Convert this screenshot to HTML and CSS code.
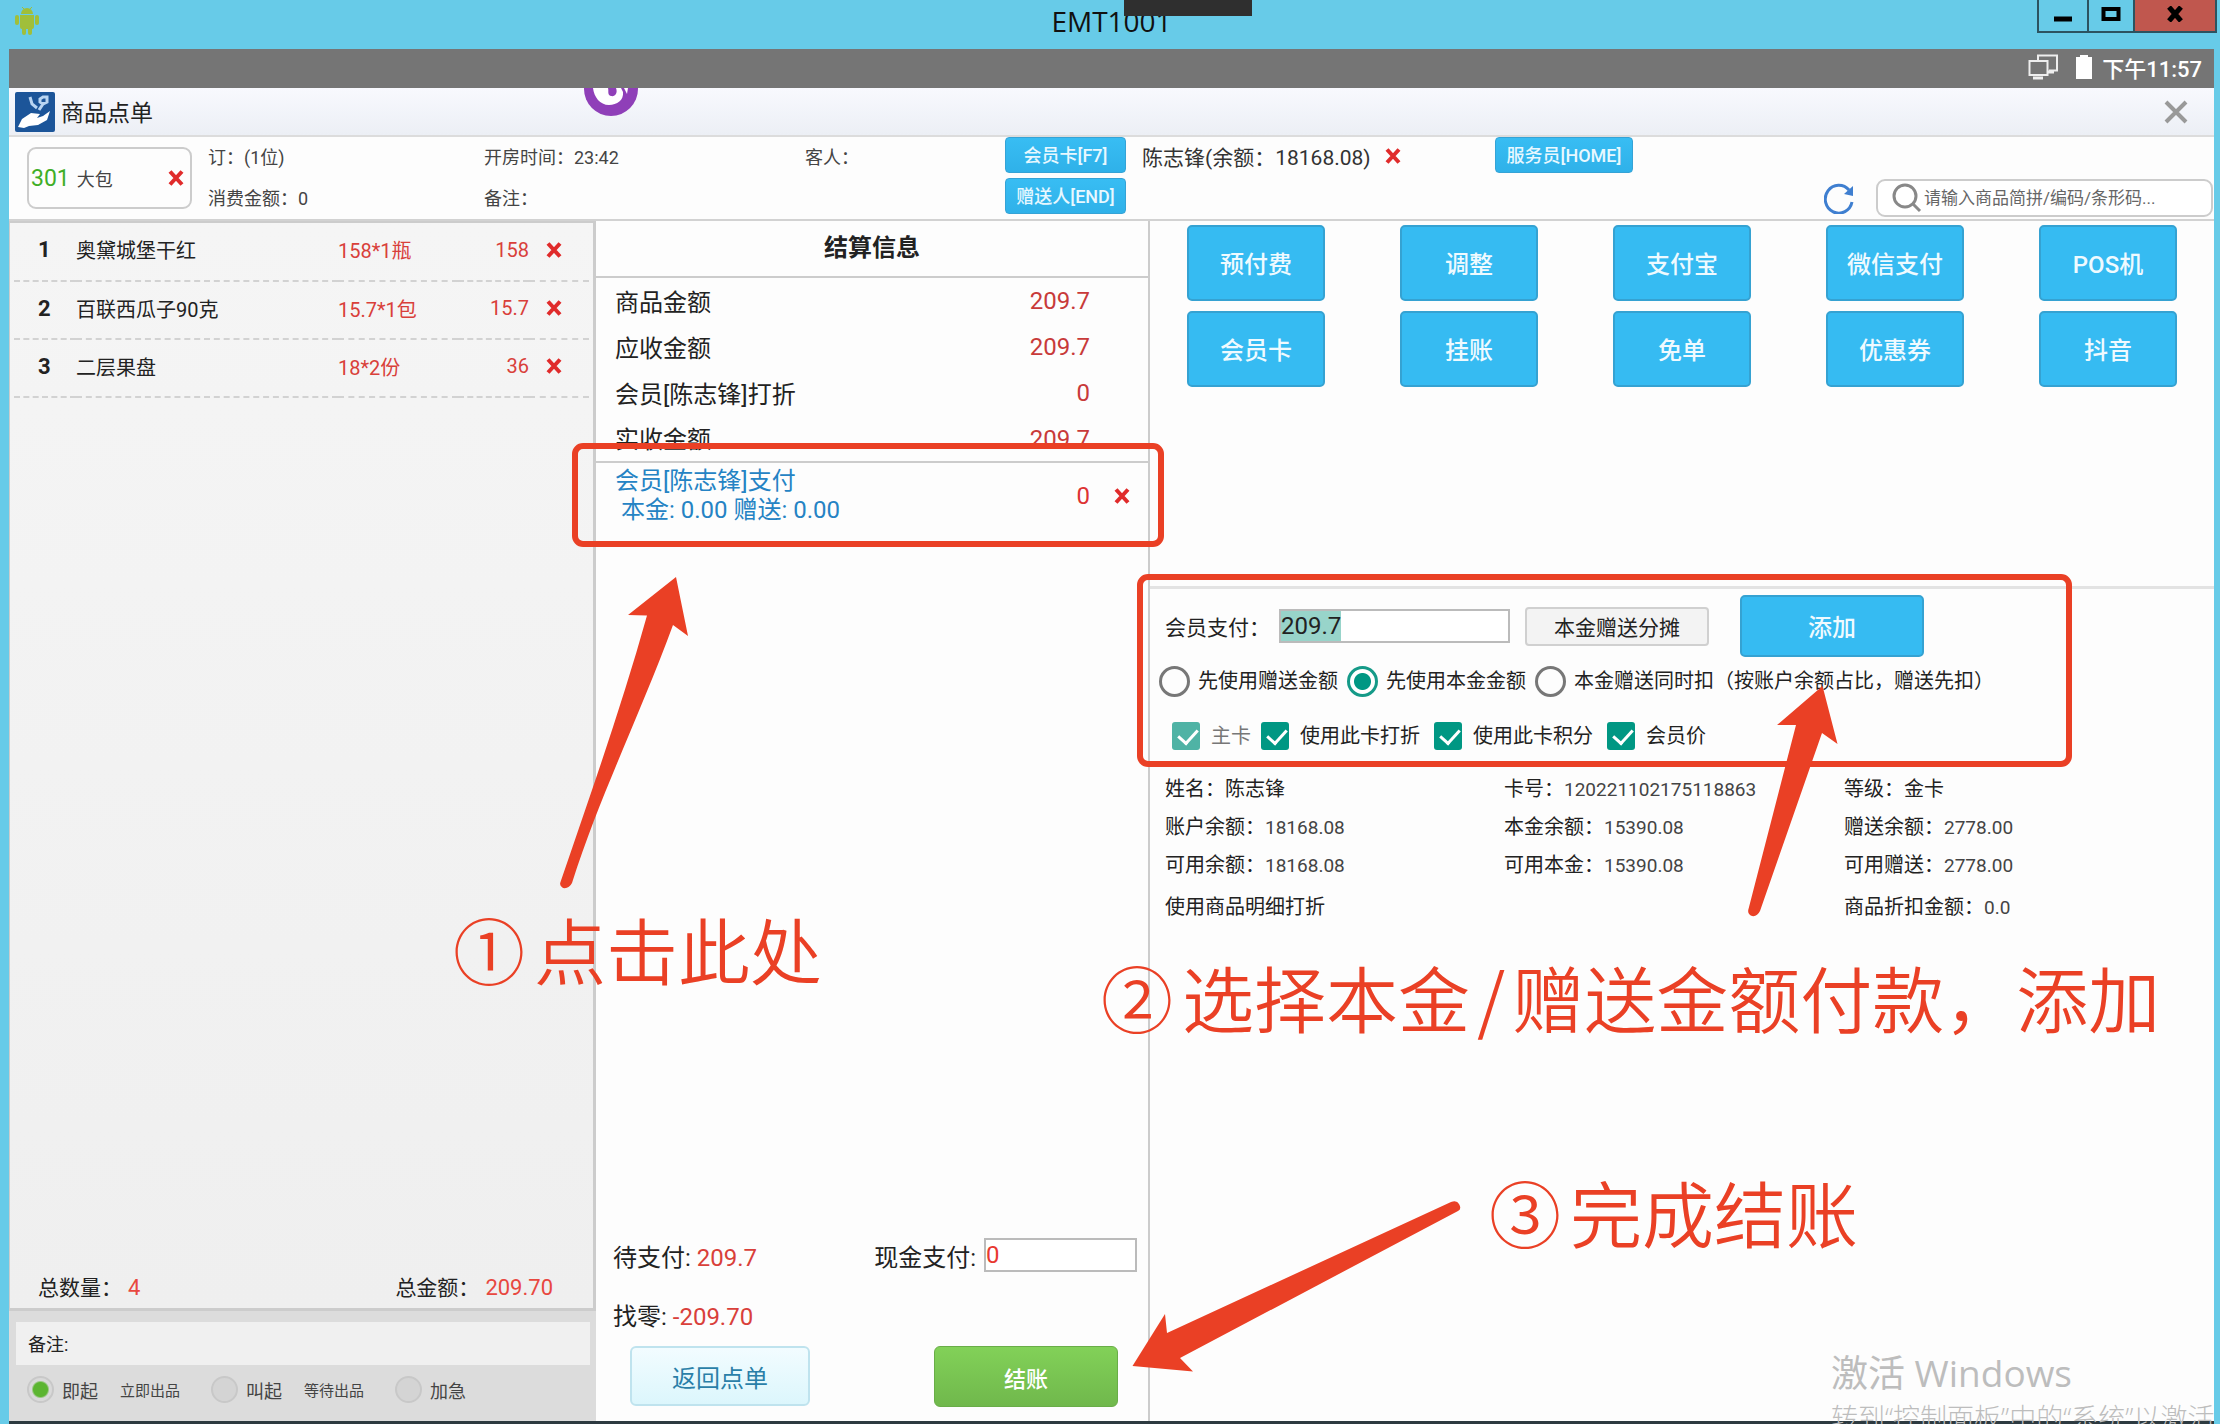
FILE: index.html
```html
<!DOCTYPE html>
<html lang="zh-CN">
<head>
<meta charset="utf-8">
<title>EMT1001</title>
<link rel="stylesheet" href="styles.css">
</head>
<body>
<svg class="defs" aria-hidden="true">
  <symbol id="cross" viewBox="0 0 16 16"><path d="M2 1.500L14 14.500M14 1.500L2 14.500" stroke="currentColor" stroke-width="4"/></symbol>
</svg>
<div class="window">
  <header class="titlebar">
    <svg class="android" viewBox="0 0 26 30" fill="#a0bf3a" aria-hidden="true">
      <path d="M7 8a6 6 0 0 1 12 0zM6 9h14v12a2 2 0 0 1-2 2H8a2 2 0 0 1-2-2z"/>
      <rect x="1" y="9" width="4" height="10" rx="2"/><rect x="21" y="9" width="4" height="10" rx="2"/>
      <rect x="8" y="20" width="4" height="9" rx="2"/><rect x="14" y="20" width="4" height="9" rx="2"/>
      <path d="M8 1l3 3M18 1l-3 3" stroke="#a0bf3a"/>
    </svg>
    <h1 class="window-title">EMT1001</h1>
    <div class="controls">
      <button class="ctl ctl-min" aria-label="最小化"><svg viewBox="0 0 20 16"><path d="M1 13h18" stroke="#000" stroke-width="5"/></svg></button>
      <button class="ctl ctl-max" aria-label="最大化"><svg viewBox="0 0 20 16"><rect x="2.500" y="3" width="15" height="10" fill="none" stroke="#000" stroke-width="4"/></svg></button>
      <button class="ctl ctl-close" aria-label="关闭"><svg viewBox="0 0 20 16"><path d="M4 1L16 15M16 1L4 15" stroke="#000" stroke-width="5"/></svg></button>
    </div>
  </header>

  <div class="screen">
    <div class="statusbar">
      <svg class="ic-net" viewBox="0 0 30 26" fill="none" stroke="#eee" stroke-width="2" aria-hidden="true">
        <path d="M10 6V1.500h19v15h-8"/><rect x="1.500" y="7" width="18" height="14"/><path d="M20 18h6M5 24h10" stroke-width="3"/>
      </svg>
      <svg class="ic-bat" viewBox="0 0 18 24" fill="#fff" aria-hidden="true"><path d="M5 0h8v2h4v22H1V2h4z"/></svg>
      <span class="clock">下午11:57</span>
    </div>

    <div class="appbar">
      <svg class="app-icon" viewBox="0 0 40 40" aria-hidden="true">
        <rect width="40" height="40" rx="2" fill="#1c5599"/>
        <path d="M3 35l4-8 9-6 9 1-3 4 6-2 7-5-3 9-9 5-9 1-5 2z" fill="#fff"/>
        <path d="M15 5l2 7 5 4M25 7l3-2 4 0 0 5-4 2-3-2zM28 12l-4 6" fill="none" stroke="#b9d5f2" stroke-width="3"/>
      </svg>
      <span class="app-title">商品点单</span>
      <svg class="float-ball" viewBox="0 0 54 28" aria-hidden="true">
        <circle cx="27" cy="1" r="27" fill="#8f3fb8"/>
        <path d="M9 0c1 9 7 17 16 17 8 0 15-5 14-13l-2-4h-5c2 5-1 9-5 8-4-1-2-5-3-8z" fill="#fff"/>
        <path d="M40 0h4l-1 6z" fill="#fff"/>
      </svg>
      <button class="app-close" aria-label="关闭"><svg viewBox="0 0 24 24"><path d="M2 2L22 22M22 2L2 22" stroke="#999" stroke-width="4"/></svg></button>
    </div>

    <section class="info">
      <div class="room"><b class="room-no">301</b><span>大包</span><button class="del" aria-label="移除"><svg><use href="#cross"/></svg></button></div>
      <span class="lbl">订：(1位)</span>
      <span class="lbl">开房时间：23:42</span>
      <span class="lbl">客人：</span>
      <button class="tag tag-fixed">会员卡[F7]</button>
      <span class="member">陈志锋(余额：18168.08)<button class="del" aria-label="移除会员"><svg><use href="#cross"/></svg></button></span>
      <button class="tag tag-home">服务员[HOME]</button>
      <span class="lbl">消费金额：0</span>
      <span class="lbl remark">备注：</span>
      <button class="tag tag-fixed">赠送人[END]</button>
      <div class="search-wrap">
        <button class="refresh" aria-label="刷新"><svg viewBox="0 0 30 32"><path d="M25 8A13.500 14 0 1 0 28 20" fill="none" stroke="#3f7fd0" stroke-width="3"/><path d="M29 4v10l-9-2z" fill="#3f7fd0"/></svg></button>
        <label class="search">
          <svg viewBox="0 0 30 30" fill="none" stroke="#888" stroke-width="3" aria-hidden="true"><circle cx="13" cy="13" r="11"/><path d="M21 21l7 7"/></svg>
          <input type="text" placeholder="请输入商品简拼/编码/条形码..." aria-label="搜索商品">
        </label>
      </div>
    </section>

    <main class="cols">
      <section class="order">
        <div class="order-list">
          <table class="items">
            <tr><th class="c-no">1</th><td class="c-name">奥黛城堡干红</td><td class="c-qty">158*1瓶</td><td class="c-price">158</td><td class="c-del"><button class="del" aria-label="删除"><svg><use href="#cross"/></svg></button></td></tr>
            <tr><th>2</th><td>百联西瓜子90克</td><td class="c-qty">15.7*1包</td><td class="c-price">15.7</td><td class="c-del"><button class="del" aria-label="删除"><svg><use href="#cross"/></svg></button></td></tr>
            <tr><th>3</th><td>二层果盘</td><td class="c-qty">18*2份</td><td class="c-price">36</td><td class="c-del"><button class="del" aria-label="删除"><svg><use href="#cross"/></svg></button></td></tr>
          </table>
          <div class="sum"><span>总数量：<em>4</em></span><span>总金额：<em>209.70</em></span></div>
        </div>
        <div class="order-foot">
          <input class="note" type="text" value="备注:" aria-label="备注">
          <div class="serve">
            <label><input type="radio" name="serve" checked>即起<small>立即出品</small></label>
            <label><input type="radio" name="serve">叫起<small>等待出品</small></label>
            <label><input type="radio" name="serve">加急</label>
          </div>
        </div>
      </section>

      <section class="bill">
        <h2 class="bill-title">结算信息</h2>
        <table class="totals">
          <tr><th>商品金额</th><td>209.7</td></tr>
          <tr><th>应收金额</th><td>209.7</td></tr>
          <tr><th>会员[陈志锋]打折</th><td>0</td></tr>
          <tr><th>实收金额</th><td>209.7</td></tr>
        </table>
        <div class="paid">
          <div class="paid-name">会员[陈志锋]支付<div class="paid-sub">本金: 0.00 赠送: 0.00</div></div>
          <span class="paid-sum">0</span>
          <button class="del" aria-label="删除支付"><svg><use href="#cross"/></svg></button>
        </div>
        <div class="due">
          <span>待支付: <em>209.7</em></span>
          <label class="cash">现金支付:<input type="text" value="0"></label>
        </div>
        <div class="change">找零: <em>-209.70</em></div>
        <div class="actions">
          <button class="btn-back">返回点单</button>
          <button class="btn-pay">结账</button>
        </div>
      </section>

      <section class="pay">
        <div class="methods">
          <button>预付费</button><button>调整</button><button>支付宝</button><button>微信支付</button><button>POS机</button>
          <button>会员卡</button><button>挂账</button><button>免单</button><button>优惠券</button><button>抖音</button>
        </div>
        <div class="member-pay">
          <label for="amount">会员支付：</label>
          <input id="amount" class="amount" type="text" value="209.7">
          <button class="btn-split">本金赠送分摊</button>
          <button class="btn-add">添加</button>
        </div>
        <div class="priority">
          <label><input type="radio" name="prio">先使用赠送金额</label>
          <label><input type="radio" name="prio" checked>先使用本金金额</label>
          <label><input type="radio" name="prio">本金赠送同时扣（按账户余额占比，赠送先扣）</label>
        </div>
        <div class="options">
          <label class="off"><input type="checkbox" checked disabled>主卡</label>
          <label><input type="checkbox" checked>使用此卡打折</label>
          <label><input type="checkbox" checked>使用此卡积分</label>
          <label><input type="checkbox" checked>会员价</label>
        </div>
        <div class="detail">
          <span>姓名：陈志锋</span><span>卡号：<i>120221102175118863</i></span><span>等级：金卡</span>
          <span>账户余额：<i>18168.08</i></span><span>本金余额：<i>15390.08</i></span><span>赠送余额：<i>2778.00</i></span>
          <span>可用余额：<i>18168.08</i></span><span>可用本金：<i>15390.08</i></span><span>可用赠送：<i>2778.00</i></span>
          <span class="last">使用商品明细打折</span><span class="last"></span><span class="last">商品折扣金额：<i>0.0</i></span>
        </div>
      </section>
    </main>
  </div>
</div>

<div class="watermark"><p class="wm-big">激活 Windows</p><p class="wm-small">转到“控制面板”中的“系统”以激活</p></div>

<div class="marks">
  <div class="notch"></div>
  <div class="frame frame-a"></div>
  <div class="frame frame-b"></div>
  <svg class="arrows" viewBox="0 0 2220 1424" fill="#ea4025" aria-hidden="true">
    <path d="M676 577L688 636L673 625C640 715 600 795 572 883Q569 889 563 888Q559 886 560.500 882C592 790 622 705 647 615.500L628 615Z"/>
    <path d="M1822.500 686L1837.500 744L1822 733L1760 911Q1757 917 1752 916Q1747 914 1748.500 909L1796 725H1777Z"/>
    <path d="M1132.500 1366L1165 1314L1167 1333L1451 1202Q1457 1200 1459 1204Q1462 1209 1458 1211L1180 1358L1193 1371.500Z"/>
  </svg>
  <p class="step step-1"><span class="num">①</span>点击此处</p>
  <p class="step step-2"><span class="num">②</span>选择本金<span class="slash">/</span>赠送金额付款，添加</p>
  <p class="step step-3"><span class="num">③</span>完成结账</p>
</div>
</body>
</html>
```
FILE: styles.css
```css
* { box-sizing: border-box; }
body {
  margin: 0;
  position: relative;
  overflow: hidden;
  background: #67cbe8;
  color: #222;
  font-family: Roboto, "Noto Sans CJK SC", sans-serif;
  font-size: 20px;
}
button, input { font: inherit; color: inherit; margin: 0; padding: 0; }
button { background: none; border: 0; cursor: pointer; }
p, h1, h2 { margin: 0; }
em, i { font-style: normal; }
em { color: #d9403a; }
.defs { position: absolute; width: 0; height: 0; }

.window { min-height: 100vh; display: flex; flex-direction: column; padding: 0 6px 0 9px; }
.titlebar { height: 49px; display: grid; grid-template-columns: 1fr auto 1fr; align-items: start; }
.android { width: 26px; height: 30px; margin: 6px 0 0 5px; }
.window-title { font: 400 28px/42px "Open Sans", sans-serif; color: #111; }
.controls { justify-self: end; display: flex; height: 33px; margin-right: -3px; border: 2px solid #2c5360; border-top: 0; }
.ctl { display: grid; place-items: center; border-right: 2px solid #2c5360; padding-bottom: 4px; }
.ctl svg { width: 20px; height: 16px; }
.ctl-min { width: 50px; }
.ctl-max { width: 46px; }
.ctl-close { width: 80px; background: #c0574e; border-right: 0; }

.screen { flex: 1; display: flex; flex-direction: column; background: #fdfdfd; border-bottom: 3px solid #2d3a40; }
.statusbar { height: 39px; background: #757575; display: flex; justify-content: flex-end; align-items: center; padding: 0 12px 3px 0; color: #fff; font-size: 22px; }
.ic-net { width: 30px; height: 26px; margin-right: 17px; }
.ic-bat { width: 18px; height: 24px; margin-right: 9px; }
.clock { font-weight: 500; }

.appbar { height: 49px; display: flex; align-items: center; padding: 0 26px 0 6px; background: linear-gradient(#f8f9fe, #eceff5); border-bottom: 2px solid #dcdcdc; position: relative; }
.app-icon { width: 40px; height: 40px; margin-right: 6px; }
.app-title { font-size: 23px; padding-bottom: 2px; }
.float-ball { position: absolute; top: 0; left: 575px; width: 54px; height: 28px; }
.app-close { margin-left: auto; width: 24px; height: 24px; display: grid; }

.info { height: 82px; padding: 0 1px 0 18px; display: grid; grid-template-columns: 181px 276px 321px 200px 137px 353px 1fr; grid-template-rows: 41px 41px; align-items: center; }
.room { grid-row: 1 / 3; width: 165px; height: 62px; border: 2px solid #ccc; border-radius: 9px; display: flex; align-items: center; padding: 0 6px 0 2px; font-size: 18px; color: #444; }
.room-no { font-weight: 400; font-size: 23px; color: #3fae28; margin-right: 7px; }
.room .del { margin-left: auto; }
.del { width: 16px; height: 16px; color: #e02b2b; display: inline-grid; flex: none; }
.del svg { width: 16px; height: 16px; }
.lbl { font-size: 18px; color: #444; padding-bottom: 3px; }
.remark { grid-column: 3 / 5; }
.member { font-size: 21px; color: #333; display: flex; align-items: center; gap: 14px; padding-bottom: 3px; }
.tag { height: 36px; background: linear-gradient(#38bdf3, #2fb1e9); border: 1px solid #35a3d6; border-radius: 4px; color: #e8f8ff; font-size: 18px; font-weight: 500; padding-bottom: 2px; align-self: start; }
.tag-fixed { width: 121px; }
.tag-home { width: 138px; }
.search-wrap { display: flex; justify-content: flex-end; align-items: center; gap: 22px; grid-column: 6 / 8; padding-bottom: 2px; }
.refresh { width: 30px; height: 32px; }
.search { display: flex; align-items: center; width: 337px; height: 38px; border: 2px solid #ccc; border-radius: 9px; padding-left: 14px; background: #fff; }
.search svg { width: 30px; height: 30px; margin-right: 2px; flex: none; }
.search input { border: 0; outline: 0; background: none; width: 100%; font-size: 17px; }
.search input::placeholder { color: #666; }

.cols { flex: 1; display: grid; grid-template-columns: 587fr 554fr 1064fr; border-top: 2px solid #d2d2d2; }

.order { display: flex; flex-direction: column; background: #dcdcdc; }
.order-list { flex: 1; display: flex; flex-direction: column; background: linear-gradient(#f5f5f5, #efefef); border: 3px solid #ccc; border-top-width: 2px; border-left-width: 1px; }
.items { margin: 0 4px; border-collapse: collapse; table-layout: fixed; }
.items tr { height: 58px; border-bottom: 2px dashed #d2d2d2; }
.items th, .items td { padding: 0 0 4px; text-align: left; }
.items th { padding-left: 24px; font-size: 22px; font-weight: 700; }
.c-no { width: 62px; }
.c-name { width: 262px; }
.items .c-qty { width: 120px; color: #d9403a; }
.items .c-price { color: #d9403a; text-align: right; }
.items .c-del { width: 60px; padding-left: 17px; line-height: 0; }
.sum { margin-top: auto; display: flex; justify-content: space-between; padding: 0 40px 4px 28px; font-size: 21px; line-height: 32px; }
.sum em { margin-left: 6px; color: #e8483f; font-size: 22px; }
.order-foot { height: 110px; padding: 11px 6px 0 7px; }
.note { width: 100%; height: 43px; border: 0; background: #f0f0f0; padding: 0 12px 2px; font-size: 18px; display: block; }
.serve { display: flex; gap: 31px; padding: 11px 0 0 11px; font-size: 18px; color: #444; }
.serve label { display: flex; align-items: center; }
.serve small { font-size: 15px; margin-left: 22px; }
.serve input { appearance: none; width: 27px; height: 27px; border: 2px solid #c8c8c8; border-radius: 50%; background: #d4d4d4; margin-right: 8px; }
.serve input:checked { background: radial-gradient(circle, #5cb531 0 7px, #d9d9d9 9px); }

.bill { display: flex; flex-direction: column; border-right: 2px solid #ccc; font-size: 24px; }
.bill-title { height: 57px; font-size: 24px; font-weight: 700; text-align: center; line-height: 54px; border-bottom: 2px solid #ccc; }
.totals { border-collapse: collapse; border-bottom: 2px solid #ccc; }
.totals tr { height: 46px; }
.totals th { text-align: left; font-weight: 400; padding: 0 0 2px 19px; }
.totals td { text-align: right; padding: 0 58px 0 0; color: #c83a3a; }
.paid { display: flex; align-items: center; padding: 0 18px 0 19px; height: 66px; line-height: 29px; color: #2583c4; }
.paid-sub { padding-left: 6px; }
.paid-sum { margin: 0 24px 0 auto; color: #d33; }
.due { margin-top: auto; display: flex; align-items: center; justify-content: space-between; padding: 0 11px 0 17px; height: 34px; }
.cash { display: flex; align-items: center; gap: 8px; }
.cash input { width: 153px; height: 34px; border: 2px solid #bbb; background: #fff; color: #e8382f; }
.change { padding-left: 17px; margin-top: 28px; line-height: 34px; }
.actions { display: flex; justify-content: space-between; padding: 12px 30px 14px 34px; }
.btn-back { width: 180px; height: 60px; border: 2px solid #bfe3ee; border-radius: 6px; background: linear-gradient(#f2fcff, #dcf6fc); color: #2a7fa8; font-size: 24px; }
.btn-pay { width: 184px; height: 61px; border: 1px solid #69ad48; border-radius: 6px; background: linear-gradient(#82d158, #70b84c); color: #fff; font-size: 22px; font-weight: 500; }

.methods { display: grid; grid-template-columns: repeat(5, 138px); grid-auto-rows: 76px; justify-content: space-between; align-content: start; row-gap: 10px; padding: 4px 37px 0; height: 368px; border-bottom: 3px solid #e3e3e3; }
.methods button, .btn-add { background: #36bbf2; border: 2px solid #35a2d2; border-radius: 5px; color: #effaff; font-size: 24px; font-weight: 500; padding-bottom: 2px; }
.member-pay { display: flex; align-items: center; padding: 6px 0 0 15px; font-size: 21px; }
.member-pay label { width: 114px; }
.amount { width: 231px; height: 34px; border: 2px solid #bbb; font-size: 24px; background: linear-gradient(#98d4ca, #98d4ca) no-repeat 0 0 / 60px 100% #fff; }
.btn-split { width: 184px; height: 39px; margin: 0 31px 0 15px; border: 2px solid #d0d0d0; border-radius: 4px; background: #f3f3f3; }
.btn-add { width: 184px; height: 62px; }
.priority, .options { display: flex; }
.priority { padding: 8px 0 0 9px; gap: 9px; }
.priority label, .options label { display: flex; align-items: center; line-height: 32px; white-space: nowrap; }
.priority input { appearance: none; width: 31px; height: 31px; border: 3px solid #777; border-radius: 50%; margin-right: 8px; }
.priority input:checked { border-color: #159a88; background: radial-gradient(circle, #009783 0 8px, #fff 9px); }
.options { padding: 23px 0 0 22px; gap: 14px; }
.options input { appearance: none; display: grid; width: 28px; height: 28px; border-radius: 3px; background: #009783; margin-right: 11px; }
.options input::after { content: ""; width: 9px; height: 16px; margin: 3px 0 0 10px; border: solid #fff; border-width: 0 3px 3px 0; transform: rotate(42deg); }
.options .off { color: #777; margin-right: -4px; }
.options .off input { background: #4fb3a5; }
.detail { display: grid; grid-template-columns: 339px 340px 1fr; grid-auto-rows: 38px; padding: 18px 0 0 15px; line-height: 38px; }
.detail i { font-size: 19px; color: #444; }
.detail .last { padding-top: 4px; }

.watermark { position: absolute; left: 1831px; top: 1348px; width: 384px; height: 76px; overflow: hidden; color: #bdbdbd; font-family: "Open Sans", "Noto Sans CJK SC", sans-serif; font-weight: 300; white-space: nowrap; }
.wm-big { font-size: 37px; line-height: 50px; font-weight: 400; }
.wm-small { font-size: 27px; line-height: 40px; }

.marks { position: absolute; inset: 0; pointer-events: none; color: #ea4025; }
.notch { position: absolute; left: 1124px; top: 0; width: 128px; height: 16px; background: #2f2f2f; }
.frame { position: absolute; border: 6px solid #ea4025; border-radius: 11px; }
.frame-a { left: 572px; top: 443px; width: 592px; height: 104px; }
.frame-b { left: 1137px; top: 574px; width: 935px; height: 193px; }
.arrows { position: absolute; left: 0; top: 0; width: 2220px; height: 1424px; }
.step { position: absolute; display: flex; align-items: center; font-size: 72px; line-height: 80px; font-weight: 350; font-family: "Noto Sans CJK SC DemiLight", "Noto Sans CJK SC", sans-serif; white-space: nowrap; }
.num { margin-right: 9px; }
.slash { margin: 0 7px; }
.step-1 { left: 453px; top: 908px; }
.step-2 { left: 1101px; top: 956px; }
.step-3 { left: 1489px; top: 1171px; }
```
